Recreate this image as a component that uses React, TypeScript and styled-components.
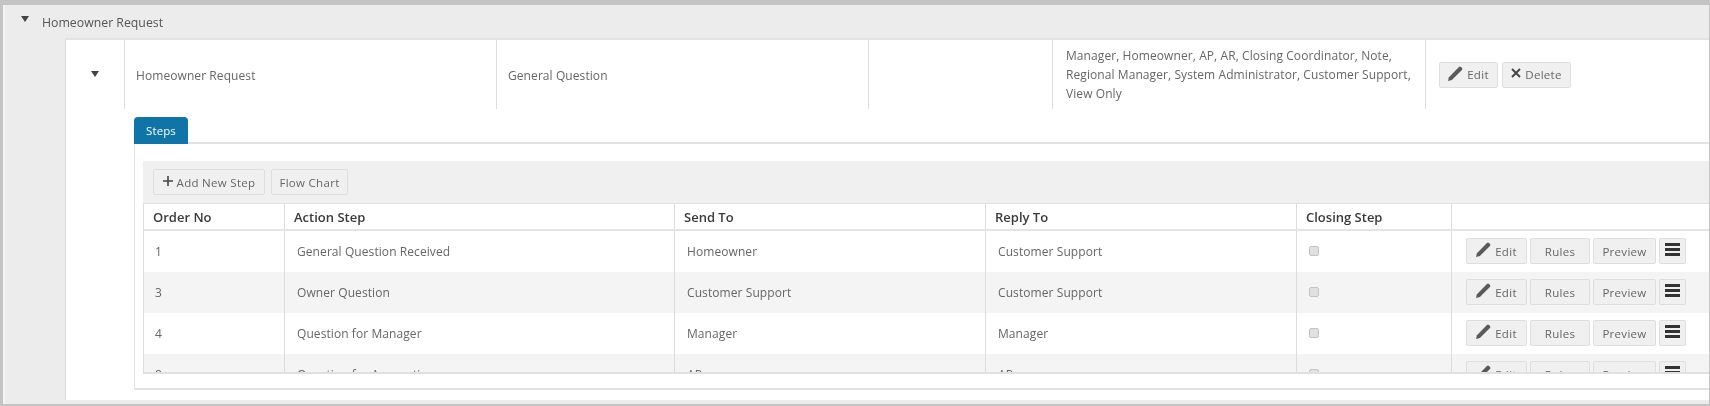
import styled, { createGlobalStyle } from 'styled-components'

const Global = createGlobalStyle`
  html, body {
    margin: 0;
    padding: 0;
    height: 406px;
    overflow: hidden;
    background: #fff;
  }
  * {
    box-sizing: border-box;
  }
`

const Frame = styled.div`
  width: 1710px;
  height: 406px;
  padding: 5px 1px 2px 6px;
  background: #ececec;
  box-shadow: inset 3px 0 0 #c4c4c4, inset 0 5px 0 #c4c4c4, inset -1px 0 0 #c4c4c4,
    inset 0 -2px 0 #c4c4c4, inset 5px 0 0 #f4f4f4;
  font-family: 'Open Sans', sans-serif;
  font-size: 12px;
  letter-spacing: 0.08px;
  color: #666;
  display: flex;
  flex-direction: column;
  filter: blur(0.3px);
`

const GroupTitle = styled.div`
  height: 33px;
  padding: 2px 0 0 15px;
  display: flex;
  align-items: center;
  gap: 13px;
  font-size: 12.3px;
  letter-spacing: 0;
  color: #555;
`

const GroupBody = styled.div`
  height: 362px;
  margin-left: 59px;
  background: #fff;
  border-left: 1px solid #dcdcdc;
  border-top: 2px solid #e2e2e2;
`

const RequestRow = styled.div`
  display: grid;
  grid-template-columns: 58px 372px 372px 184px 373px 1fr;
  height: 69px;
`

const RequestCell = styled.div`
  display: flex;
  align-items: center;
  padding: 3px 11px 0;
  border-left: 1px solid #dcdcdc;
  line-height: 18.7px;
  &:first-child {
    border-left: 0;
    justify-content: center;
    padding: 0 0 2px;
  }
`

const RolesCell = styled(RequestCell)`
  padding: 2px 6px 0 13px;
`

const ActionCell = styled(RequestCell)`
  padding: 0 13px;
`

const ActionGroup = styled.div<{ $gap: number }>`
  display: flex;
  align-items: flex-start;
  gap: ${(p) => p.$gap}px;
`

const Tabs = styled.div`
  margin: 8px 0 0 68px;
  height: 27px;
  border-bottom: 2px solid #e2e2e2;
`

const Tab = styled.div`
  width: 54px;
  height: 27px;
  display: flex;
  align-items: center;
  justify-content: center;
  background: #0f74a8;
  color: #fff;
  font-size: 11.5px;
  border-radius: 4px 4px 0 0;
`

const TabPanel = styled.div`
  margin-left: 68px;
  height: 246px;
  padding: 17px 0 0 8px;
  border-left: 1px solid #e2e2e2;
  border-bottom: 2px solid #e2e2e2;
`

const Toolbar = styled.div`
  height: 42px;
  background: #f0f0f0;
  padding: 8px 0 0 10px;
  display: flex;
  align-items: flex-start;
  gap: 6px;
`

const Button = styled.button<{ $width: number }>`
  width: ${(p) => p.$width}px;
  height: 26px;
  padding: 0;
  display: inline-flex;
  align-items: center;
  justify-content: center;
  gap: 4px;
  background: #f0f0f0;
  border: 1px solid #dedede;
  border-radius: 2px;
  font-family: inherit;
  font-size: 11.5px;
  letter-spacing: 0.3px;
  color: #666;
`

const MenuButton = styled(Button)`
  padding-bottom: 3px;
`

const Glyph = styled.svg`
  margin-bottom: 3px;
  flex: none;
`

const TableClip = styled.div`
  height: 171px;
  overflow: hidden;
  border-top: 1px solid #e0e0e0;
  border-left: 1px solid #dcdcdc;
  border-bottom: 2px solid #e0e0e0;
`

const StepRow = styled.div<{ $shaded?: boolean }>`
  display: grid;
  grid-template-columns: 140px 390px 311px 311px 155px 1fr;
  height: 41px;
  background: ${(p) => (p.$shaded ? '#f4f4f4' : '#fff')};
`

const HeadRow = styled(StepRow)`
  height: 27px;
  background: #fff;
  border-bottom: 2px solid #e4e4e4;
`

const HeadCell = styled.div<{ $first?: boolean }>`
  display: flex;
  align-items: center;
  padding-left: 9px;
  border-left: ${(p) => (p.$first ? '0' : '1px solid #dcdcdc')};
  font-size: 13px;
  font-weight: 600;
  letter-spacing: 0;
  color: #3a3a3a;
`

const StepCell = styled.div<{ $first?: boolean }>`
  display: flex;
  align-items: center;
  padding-left: ${(p) => (p.$first ? 11 : 12)}px;
  border-left: ${(p) => (p.$first ? '0' : '1px solid #dcdcdc')};
`

const CheckCell = styled(StepCell)`
  padding: 0 0 1px 12px;
`

const Check = styled.span`
  width: 10px;
  height: 10px;
  background: #e0e0e0;
  border: 1px solid #c4c4c4;
  border-radius: 2px;
`

const StepActions = styled(StepCell)`
  padding: 7px 0 0 14px;
  align-items: flex-start;
`

const Caret = styled.span`
  width: 0;
  height: 0;
  border-left: 4px solid transparent;
  border-right: 4px solid transparent;
  border-top: 6px solid #444;
`

const GroupCaret = styled(Caret)`
  margin-bottom: 8px;
`

const Bars = () => (
  <svg width="15" height="13" viewBox="0 0 15 13">
    <path d="M0 0h15v3H0zM0 5h15v3H0zM0 10h15v3H0z" fill="#333" />
  </svg>
)

const Cross = () => (
  <Glyph width="10" height="10" viewBox="0 0 10 10">
    <path d="M1 1l8 8M9 1l-8 8" stroke="#444" strokeWidth="1.9" fill="none" />
  </Glyph>
)

const Plus = () => (
  <Glyph width="10" height="10" viewBox="0 0 10 10">
    <path d="M5 0v10M0 5h10" stroke="#444" strokeWidth="1.6" fill="none" />
  </Glyph>
)

const Pencil = () => (
  <Glyph width="15" height="15" viewBox="0 0 14 14">
    <path d="M0 14l.9-3.6L10.2 1q1-.9 2 0l.8.8q.9 1 0 2L3.6 13.1z" fill="#5a5a5a" />
  </Glyph>
)

const steps = [
  { order: '1', action: 'General Question Received', sendTo: 'Homeowner', replyTo: 'Customer Support' },
  { order: '3', action: 'Owner Question', sendTo: 'Customer Support', replyTo: 'Customer Support' },
  { order: '4', action: 'Question for Manager', sendTo: 'Manager', replyTo: 'Manager' },
  { order: '8', action: 'Question for Accounting', sendTo: 'AP', replyTo: 'AP' },
]

export default function App() {
  return (
    <Frame>
      <Global />
      <GroupTitle>
        <GroupCaret />
        Homeowner Request
      </GroupTitle>
      <GroupBody>
        <RequestRow>
          <RequestCell>
            <Caret />
          </RequestCell>
          <RequestCell>Homeowner Request</RequestCell>
          <RequestCell>General Question</RequestCell>
          <RequestCell />
          <RolesCell>
            Manager, Homeowner, AP, AR, Closing Coordinator, Note, Regional Manager, System
            Administrator, Customer Support, View Only
          </RolesCell>
          <ActionCell>
            <ActionGroup $gap={4}>
              <Button $width={59}>
                <Pencil />
                Edit
              </Button>
              <Button $width={69}>
                <Cross />
                Delete
              </Button>
            </ActionGroup>
          </ActionCell>
        </RequestRow>
        <Tabs>
          <Tab>Steps</Tab>
        </Tabs>
        <TabPanel>
          <Toolbar>
            <Button $width={112}>
              <Plus />
              Add New Step
            </Button>
            <Button $width={77}>Flow Chart</Button>
          </Toolbar>
          <TableClip>
            <HeadRow>
              <HeadCell $first>Order No</HeadCell>
              <HeadCell>Action Step</HeadCell>
              <HeadCell>Send To</HeadCell>
              <HeadCell>Reply To</HeadCell>
              <HeadCell>Closing Step</HeadCell>
              <HeadCell />
            </HeadRow>
            {steps.map((s, i) => (
              <StepRow key={s.order} $shaded={i % 2 === 1}>
                <StepCell $first>{s.order}</StepCell>
                <StepCell>{s.action}</StepCell>
                <StepCell>{s.sendTo}</StepCell>
                <StepCell>{s.replyTo}</StepCell>
                <CheckCell>
                  <Check />
                </CheckCell>
                <StepActions>
                  <ActionGroup $gap={3}>
                    <Button $width={61}>
                      <Pencil />
                      Edit
                    </Button>
                    <Button $width={60}>Rules</Button>
                    <Button $width={63}>Preview</Button>
                    <MenuButton $width={27}>
                      <Bars />
                    </MenuButton>
                  </ActionGroup>
                </StepActions>
              </StepRow>
            ))}
          </TableClip>
        </TabPanel>
      </GroupBody>
    </Frame>
  )
}
